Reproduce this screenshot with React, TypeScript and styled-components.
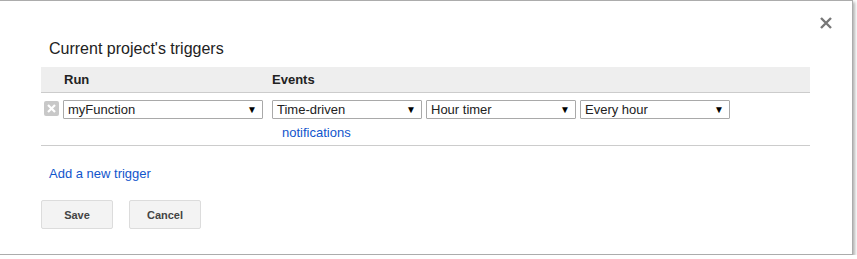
import styled, { createGlobalStyle } from "styled-components";

const GlobalStyle = createGlobalStyle`
  body {
    margin: 0;
    background: #fff;
    font-family: "Liberation Sans", Arial, sans-serif;
  }
`;

const Dialog = styled.div`
  position: relative;
  box-sizing: border-box;
  width: 853px;
  height: 255px;
  background: #fff;
  border-top: 1px solid #acacac;
  border-right: 1px solid #acacac;
  border-bottom: 1px solid #acacac;
  box-shadow: 2px 2px 3px rgba(0, 0, 0, 0.3);
  padding: 38px 42px 0 41px;
`;

const Close = styled.button`
  position: absolute;
  top: 15px;
  right: 19px;
  width: 14px;
  height: 14px;
  padding: 0;
  border: 0;
  background: none;
  cursor: pointer;
`;

const Title = styled.h2`
  margin: 0 0 9px 8px;
  font-size: 16px;
  font-weight: normal;
  color: #222;
  line-height: 19px;
`;

const Table = styled.div`
  width: 769px;
`;

const HeadRow = styled.div`
  display: flex;
  height: 25px;
  align-items: center;
  background: #eee;
  border-bottom: 1px solid #ccc;
  font-size: 13px;
  font-weight: bold;
  color: #222;
`;

const HeadCell = styled.div<{ $w: number }>`
  width: ${(p) => p.$w}px;
  padding-left: ${(p) => (p.$w > 100 ? 23 : 0)}px;
  box-sizing: border-box;
`;

const Row = styled.div`
  display: flex;
  align-items: flex-start;
  padding: 7px 0 6px 3px;
  height: 53px;
  box-sizing: border-box;
  border-bottom: 1px solid #ccc;
`;

const Remove = styled.div`
  width: 15px;
  height: 15px;
  margin-top: 1px;
  border-radius: 2px;
  background: #c8c8c8;
  display: flex;
  align-items: center;
  justify-content: center;
  margin-right: 4px;
`;

const RunCol = styled.div`
  width: 209px;
`;

const EventsCol = styled.div`
  display: flex;
  flex-direction: column;
`;

const Selects = styled.div`
  display: flex;
  gap: 4px;
`;

const Select = styled.div<{ $w: number }>`
  width: ${(p) => p.$w}px;
  height: 19px;
  box-sizing: border-box;
  border: 1px solid #a9a9a9;
  border-radius: 1px;
  display: flex;
  align-items: center;
  justify-content: space-between;
  padding: 0 5px 0 4px;
  font-size: 13px;
  color: #222;
  background: #fff;
`;

const Arrow = styled.span`
  font-size: 10px;
  color: #000;
`;

const Link = styled.a`
  color: #15c;
  font-size: 13px;
  text-decoration: none;
  cursor: pointer;
`;

const Notify = styled(Link)`
  margin: 6px 0 0 10px;
`;

const AddRow = styled.div`
  padding: 19px 0 0 8px;
  line-height: 16px;
`;

const Buttons = styled.div`
  display: flex;
  gap: 16px;
  margin-top: 18px;
`;

const Button = styled.button`
  width: 72px;
  height: 29px;
  box-sizing: border-box;
  border: 1px solid #dcdcdc;
  border-radius: 2px;
  background: #f3f3f3;
  color: #444;
  font-family: "Liberation Sans", Arial, sans-serif;
  font-size: 11px;
  font-weight: bold;
  cursor: pointer;
`;

function Dropdown({ w, label }: { w: number; label: string }) {
  return (
    <Select $w={w}>
      <span>{label}</span>
      <Arrow>▼</Arrow>
    </Select>
  );
}

export default function App() {
  return (
    <>
      <GlobalStyle />
      <Dialog>
        <Close aria-label="Close">
          <svg width="14" height="14" viewBox="0 0 14 14">
            <path d="M2 2 L12 12 M12 2 L2 12" stroke="#777" strokeWidth="2.4" />
          </svg>
        </Close>
        <Title>Current project's triggers</Title>
        <Table>
          <HeadRow>
            <HeadCell $w={231}>Run</HeadCell>
            <HeadCell $w={60}>Events</HeadCell>
          </HeadRow>
          <Row>
            <Remove>
              <svg width="9" height="9" viewBox="0 0 9 9">
                <path d="M1 1 L8 8 M8 1 L1 8" stroke="#fff" strokeWidth="2.2" />
              </svg>
            </Remove>
            <RunCol>
              <Dropdown w={200} label="myFunction" />
            </RunCol>
            <EventsCol>
              <Selects>
                <Dropdown w={150} label="Time-driven" />
                <Dropdown w={150} label="Hour timer" />
                <Dropdown w={150} label="Every hour" />
              </Selects>
              <Notify>notifications</Notify>
            </EventsCol>
          </Row>
          <AddRow>
            <Link>Add a new trigger</Link>
          </AddRow>
          <Buttons>
            <Button>Save</Button>
            <Button>Cancel</Button>
          </Buttons>
        </Table>
      </Dialog>
    </>
  );
}
